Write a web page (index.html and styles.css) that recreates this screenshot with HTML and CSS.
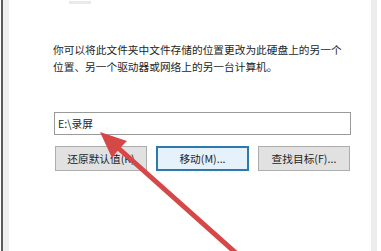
FILE: index.html
```html
<!DOCTYPE html>
<html lang="zh-CN">
<head>
    <meta charset="UTF-8">
    <meta name="viewport" content="width=device-width, initial-scale=1.0">
    <title>位置</title>
    <link rel="stylesheet" href="styles.css">
</head>
<body>
    <div class="window">
        <div class="edge-left"></div>
        <div class="content">
            <div class="tab-stub"></div>
            <p class="desc">
                <span class="line">你可以将此文件夹中文件存储的位置更改为此硬盘上的另一个</span>
                <span class="line">位置、另一个驱动器或网络上的另一台计算机。</span>
            </p>
            <div class="path-box">E:\录屏</div>
            <div class="buttons">
                <button class="btn">还原默认值(R)</button>
                <button class="btn btn-default">移动(M)...</button>
                <button class="btn">查找目标(F)...</button>
            </div>
        </div>
        <div class="edge-right"></div>
    </div>

    <svg class="arrow" width="381" height="251" viewBox="0 0 381 251">
        <line x1="116" y1="146" x2="246" y2="262" stroke="#d64848" stroke-width="5" stroke-linecap="round"/>
        <polygon points="100,132 127,141 119,149 112,158" fill="#d64848"/>
    </svg>
</body>
</html>
```

FILE: styles.css
```css
body {
    margin: 0;
    background: #ffffff;
    font-family: "Noto Sans CJK SC", "Microsoft YaHei", sans-serif;
    color: #1e1e1e;
}
.window {
    display: flex;
    height: 251px;
    padding-left: 1px;
    overflow: hidden;
}
.edge-left {
    width: 6px;
    border-left: 2px solid #5c5c5c;
    background: #f0f0f0;
}
.content {
    flex: 1;
    padding-left: 44px;
}
.tab-stub {
    width: 22px;
    height: 3px;
    margin: 1px 0 0 16px;
    background: #ebebe6;
}
.desc {
    margin: 37px 0 0;
    font-size: 10.7px;
    line-height: 17px;
}
.line {
    display: block;
    white-space: nowrap;
}
.path-box {
    box-sizing: border-box;
    width: 297px;
    height: 23px;
    margin-top: 37px;
    margin-left: 1px;
    padding-left: 3px;
    border: 1px solid #9a9a9a;
    font-size: 10.7px;
    line-height: 21px;
}
.buttons {
    display: flex;
    gap: 9px;
    margin-top: 11px;
    margin-left: 2px;
}
.btn {
    box-sizing: border-box;
    width: 92px;
    height: 25px;
    padding: 0;
    background: #e1e1e1;
    border: 1px solid #adadad;
    font-family: inherit;
    font-size: 10.7px;
    color: #1e1e1e;
}
.btn-default {
    width: 93px;
    background: #e5f1fb;
    border: 2px solid #2d79ad;
}
.edge-right {
    width: 6px;
    margin-right: 4px;
    background: #ededed;
}
.arrow {
    position: absolute;
    left: 0;
    top: 0;
    pointer-events: none;
}
```
